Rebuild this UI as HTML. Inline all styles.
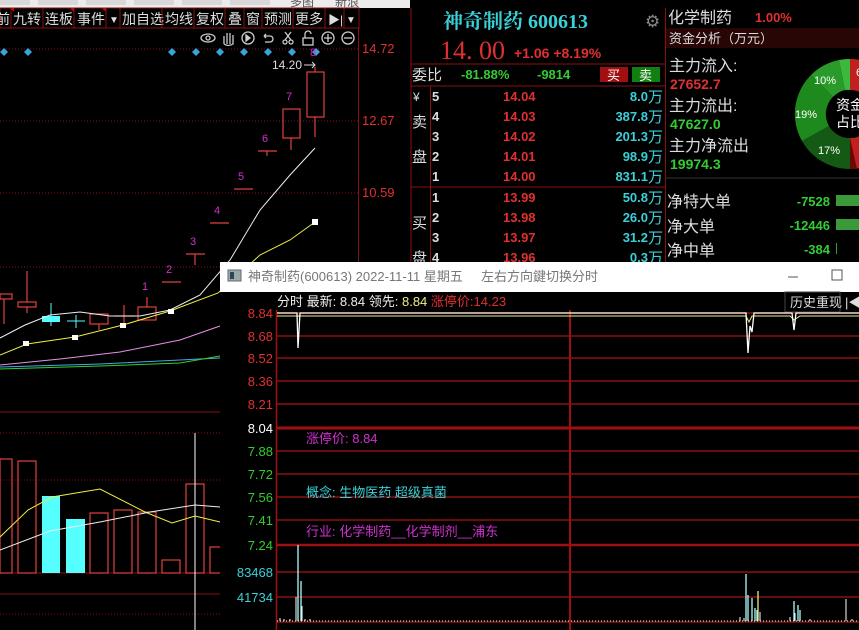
<!DOCTYPE html>
<html><head><meta charset="utf-8"><style>
html,body{margin:0;padding:0;background:#000;width:859px;height:630px;overflow:hidden}
svg{display:block}
text{font-family:"Liberation Sans","Noto Sans CJK SC",sans-serif}
.s{font-family:"Liberation Serif","Noto Serif CJK SC",serif}
</style></head><body>
<svg width="859" height="630" viewBox="0 0 859 630" xmlns="http://www.w3.org/2000/svg">
<rect width="859" height="630" fill="#000"/>
<rect x="0" y="0" width="410" height="8" fill="#ececec"/>
<rect x="0" y="0" width="30" height="5" fill="#d8d8d8"/><rect x="38" y="0" width="40" height="5" fill="#d8d8d8"/><rect x="86" y="0" width="40" height="5" fill="#d8d8d8"/><rect x="134" y="0" width="40" height="5" fill="#d8d8d8"/><rect x="182" y="0" width="40" height="5" fill="#d8d8d8"/><rect x="230" y="0" width="40" height="5" fill="#d8d8d8"/>
<text x="290" y="6" font-size="12" fill="#555">多图</text><text x="335" y="6" font-size="12" fill="#555">新浪</text>
<rect x="0" y="8" width="359" height="20" fill="#000" stroke="#8a1010" stroke-width="1"/>
<g font-size="14" fill="#ddd">
<text x="-4" y="24">前</text><text x="13" y="24">九转</text><text x="45" y="24">连板</text><text x="77" y="24">事件</text>
<text x="109" y="23" font-size="10">▼</text><text x="122" y="24">加自选</text><text x="165" y="24">均线</text><text x="196" y="24">复权</text>
<text x="228" y="24">叠</text><text x="246" y="24">窗</text><text x="264" y="24">预测</text><text x="295" y="24">更多</text>
<text x="328" y="24" font-size="12">▶|</text><text x="346" y="23" font-size="10">▼</text></g>
<g stroke="#8a1010"><line x1="11" y1="8" x2="11" y2="28"/><line x1="43" y1="8" x2="43" y2="28"/><line x1="74" y1="8" x2="74" y2="28"/><line x1="106" y1="8" x2="106" y2="28"/><line x1="120" y1="8" x2="120" y2="28"/><line x1="162" y1="8" x2="162" y2="28"/><line x1="194" y1="8" x2="194" y2="28"/><line x1="225" y1="8" x2="225" y2="28"/><line x1="244" y1="8" x2="244" y2="28"/><line x1="262" y1="8" x2="262" y2="28"/><line x1="293" y1="8" x2="293" y2="28"/><line x1="325" y1="8" x2="325" y2="28"/><line x1="344" y1="8" x2="344" y2="28"/></g>
<g fill="#d00"><path d="M10 8l4 0 0 4z"/><path d="M70 8l4 0 0 4z"/><path d="M102 8l4 0 0 4z"/></g>
<g stroke="#ccc" fill="none" stroke-width="1.3">
<ellipse cx="208" cy="38" rx="7" ry="4"/><circle cx="208" cy="38" r="2"/>
<path d="M224 44v-8M227 44v-11M230 44v-11M233 44v-9M224 44q4 3 9 0v-5"/>
<circle cx="248" cy="38" r="6"/><path d="M246 35l4 3-4 3z" fill="#ccc"/>
<path d="M264 36h6a3 3 0 010 6h-5M264 36l2-2M264 36l2 2"/>
<circle cx="285" cy="42" r="2"/><circle cx="291" cy="42" r="2"/><path d="M285 40l6-8M291 40l-6-8"/>
<rect x="303" y="38" width="10" height="7"/><path d="M305 38v-4a3 3 0 016 0"/>
<circle cx="328" cy="38" r="6"/><path d="M324 38h8M328 34v8"/>
<circle cx="348" cy="38" r="6"/><path d="M344 38h8"/></g>
<g stroke="#8a1010" stroke-dasharray="1 2"><line x1="0" y1="49" x2="358" y2="49"/><line x1="0" y1="121" x2="358" y2="121"/><line x1="0" y1="193" x2="358" y2="193"/><line x1="0" y1="267" x2="220" y2="267"/><line x1="0" y1="433" x2="220" y2="433"/><line x1="0" y1="480" x2="220" y2="480"/></g>
<g stroke="#8a1010"><line x1="0" y1="412" x2="220" y2="412"/><line x1="0" y1="573" x2="220" y2="573"/><line x1="0" y1="594" x2="220" y2="594"/><line x1="0" y1="614" x2="220" y2="614" stroke-dasharray="1 2"/></g>
<line x1="358.5" y1="28" x2="358.5" y2="262" stroke="#8a1010"/>
<g font-size="13" fill="#e03030"><text x="362" y="53">14.72</text><text x="362" y="125">12.67</text><text x="362" y="197">10.59</text></g>
<g fill="#3aa6d8"><path d="M4 48l4 4-4 4-4-4z"/><path d="M28 48l4 4-4 4-4-4z"/><path d="M172 48l4 4-4 4-4-4z"/><path d="M196 48l4 4-4 4-4-4z"/><path d="M220 48l4 4-4 4-4-4z"/><path d="M244 48l4 4-4 4-4-4z"/><path d="M268 48l4 4-4 4-4-4z"/><path d="M292 48l4 4-4 4-4-4z"/><path d="M316 48l4 4-4 4-4-4z"/></g>
<g stroke="#e04040" fill="none" stroke-width="1.2">
<rect x="0" y="294" width="12" height="5"/><line x1="4" y1="299" x2="4" y2="324"/>
<rect x="18" y="302" width="18" height="5"/><line x1="27" y1="271" x2="27" y2="302"/><line x1="27" y1="307" x2="27" y2="313"/>
<rect x="90" y="314" width="18" height="10"/><line x1="99" y1="324" x2="99" y2="330"/>
<line x1="115" y1="316" x2="135" y2="316"/><line x1="124" y1="305" x2="124" y2="325"/>
<rect x="138" y="307" width="18" height="13"/><line x1="147" y1="297" x2="147" y2="307"/>
<line x1="162" y1="282" x2="181" y2="282"/>
<line x1="186" y1="254" x2="205" y2="254"/><line x1="195" y1="254" x2="195" y2="265"/>
<line x1="210" y1="223" x2="229" y2="223"/>
<line x1="234" y1="189" x2="253" y2="189"/>
<line x1="258" y1="151" x2="277" y2="151"/><line x1="267" y1="151" x2="267" y2="156"/>
<rect x="283" y="109" width="17" height="29"/><line x1="291" y1="138" x2="291" y2="150"/>
<rect x="307" y="72" width="17" height="45"/><line x1="315" y1="67" x2="315" y2="72"/><line x1="315" y1="117" x2="315" y2="137"/></g>
<rect x="42" y="316" width="18" height="6" fill="#5ff"/><line x1="51" y1="303" x2="51" y2="326" stroke="#5ff"/>
<line x1="67" y1="321" x2="85" y2="321" stroke="#5ff"/><line x1="76" y1="315" x2="76" y2="328" stroke="#5ff"/>
<g font-size="11" fill="#d030d0"><text x="142" y="290">1</text><text x="166" y="273">2</text><text x="190" y="245">3</text><text x="214" y="214">4</text><text x="238" y="180">5</text><text x="262" y="142">6</text><text x="286" y="100">7</text><text x="310" y="56">8</text></g>
<text x="272" y="69" font-size="12" fill="#ddd">14.20</text><path d="M304 65h11M312 62l3 3-3 3" stroke="#ddd" fill="none"/>
<polyline points="0,338 25,325 50,315 80,312 110,316 140,316 170,310 200,295 230,260 260,210 290,175 315,148" fill="none" stroke="#eee"/>
<polyline points="0,355 27,344 75,337 123,325 170,311 218,293 260,255 290,240 315,222" fill="none" stroke="#ee4"/>
<polyline points="0,365 60,359 120,352 180,340 220,326" fill="none" stroke="#e890e8"/>
<polyline points="0,367 100,364 220,358" fill="none" stroke="#4ad"/>
<polyline points="0,369 100,366 180,363 220,356" fill="none" stroke="#3c3"/>
<g fill="#fff"><rect x="23" y="341" width="6" height="5"/><rect x="72" y="335" width="6" height="5"/><rect x="120" y="323" width="6" height="5"/><rect x="168" y="309" width="6" height="5"/><rect x="312" y="219" width="6" height="6"/></g>
<g stroke="#e04040" fill="none" stroke-width="1.2">
<rect x="0" y="459" width="12" height="114"/><rect x="18" y="461" width="18" height="112"/><rect x="90" y="513" width="18" height="60"/><rect x="114" y="510" width="18" height="63"/><rect x="138" y="512" width="18" height="61"/><rect x="162" y="560" width="18" height="13"/><rect x="186" y="484" width="18" height="89"/><rect x="210" y="547" width="12" height="26"/></g>
<rect x="42" y="496" width="18" height="77" fill="#5ff"/><rect x="66" y="519" width="19" height="54" fill="#5ff"/>
<line x1="195" y1="433" x2="195" y2="630" stroke="#fff"/>
<polyline points="0,537 28,510 52,497 100,489 145,512 172,523 195,516 220,522" fill="none" stroke="#ee4"/>
<polyline points="0,550 50,531 100,522 150,512 195,505 220,507" fill="none" stroke="#eee"/>
<line x1="411" y1="8" x2="411" y2="262" stroke="#8a1010"/>
<text x="443" y="28" class="s" font-size="20" font-weight="bold" fill="#3ad0d8">神奇制药 600613</text>
<text x="645" y="27" font-size="17" fill="#888">⚙</text>
<text x="440" y="59" class="s" font-size="26" fill="#e03030">14. 00</text>
<text x="514" y="58" font-size="14" font-weight="bold" fill="#e03030">+1.06  +8.19%</text>
<line x1="411" y1="64" x2="665" y2="64" stroke="#8a1010"/>
<text x="412" y="80" font-size="15" fill="#ddd">委比</text>
<text x="461" y="79" font-size="13" font-weight="bold" fill="#3c3">-81.88%</text><text x="537" y="79" font-size="13" font-weight="bold" fill="#3c3">-9814</text>
<rect x="600" y="67" width="28" height="15" fill="#a01010"/><text x="607" y="80" font-size="13" fill="#fff">买</text>
<rect x="632" y="67" width="28" height="15" fill="#108010"/><text x="639" y="80" font-size="13" fill="#fff">卖</text>
<line x1="411" y1="86" x2="665" y2="86" stroke="#8a1010"/>
<line x1="430.5" y1="86" x2="430.5" y2="262" stroke="#8a1010"/>
<line x1="411" y1="187" x2="665" y2="187" stroke="#8a1010"/>
<g font-size="15" fill="#ddd"><text x="413" y="101" font-size="12">¥</text><text x="412" y="127">卖</text><text x="412" y="162">盘</text><text x="412" y="228">买</text><text x="412" y="263">盘</text></g>
<g font-size="13" font-weight="bold">
<g fill="#ddd"><text x="432" y="101">5</text><text x="432" y="121">4</text><text x="432" y="141">3</text><text x="432" y="161">2</text><text x="432" y="181">1</text><text x="432" y="202">1</text><text x="432" y="222">2</text><text x="432" y="242">3</text><text x="432" y="262">4</text></g>
<g fill="#e03030"><text x="503" y="101">14.04</text><text x="503" y="121">14.03</text><text x="503" y="141">14.02</text><text x="503" y="161">14.01</text><text x="503" y="181">14.00</text><text x="503" y="202">13.99</text><text x="503" y="222">13.98</text><text x="503" y="242">13.97</text><text x="503" y="262">13.96</text></g>
<g fill="#3ad0d8" text-anchor="end"><text x="648" y="101">8.0</text><text x="648" y="121">387.8</text><text x="648" y="141">201.3</text><text x="648" y="161">98.9</text><text x="648" y="181">831.1</text><text x="648" y="202">50.8</text><text x="648" y="222">26.0</text><text x="648" y="242">31.2</text><text x="648" y="262">0.3</text></g></g>
<g font-size="15" fill="#3ad0d8"><text x="648" y="102">万</text><text x="648" y="122">万</text><text x="648" y="142">万</text><text x="648" y="162">万</text><text x="648" y="182">万</text><text x="648" y="203">万</text><text x="648" y="223">万</text><text x="648" y="243">万</text><text x="648" y="263">万</text></g>
<line x1="665.5" y1="8" x2="665.5" y2="262" stroke="#8a1010"/>
<text x="668" y="23" font-size="16" fill="#ddd">化学制药</text><text x="755" y="22" font-size="13" font-weight="bold" fill="#e03030">1.00%</text>
<rect x="666" y="28" width="193" height="20" fill="#280606"/>
<text x="669" y="43" font-size="13" fill="#ddd">资金分析（万元）</text>
<g font-size="16" fill="#ddd"><text x="669" y="71">主力流入:</text><text x="669" y="111">主力流出:</text><text x="669" y="151">主力净流出</text></g>
<g font-size="14" font-weight="bold"><text x="670" y="89" fill="#e03030">27652.7</text><text x="670" y="129" fill="#3c3">47627.0</text><text x="670" y="169" fill="#3c3">19974.3</text></g>
<line x1="666" y1="178" x2="859" y2="178" stroke="#333"/>
<g transform="translate(850,114)">
<path d="M0-55A55 55 0 0 1 0 55L0 24A24 24 0 0 0 0-24z" fill="#c02020"/>
<path d="M7 55A55 55 0 0 1 0 55L0 24z" fill="#6a0808"/>
<path d="M0 55A55 55 0 0 1-48 27L-21 12A24 24 0 0 0 0 24z" fill="#145a14"/>
<path d="M-48 27A55 55 0 0 1-39-39L-17-17A24 24 0 0 0-21 12z" fill="#1e8a1e"/>
<path d="M-39-39A55 55 0 0 1-11-54L-5-24A24 24 0 0 0-17-17z" fill="#2a9a2a"/>
<path d="M-11-54A55 55 0 0 1 0-55L0-24A24 24 0 0 0-5-24z" fill="#3cb83c"/>
<circle r="24" fill="#000"/>
<g font-size="11" fill="#fff"><text x="-36" y="-30">10%</text><text x="-55" y="4">19%</text><text x="-32" y="40">17%</text><text x="6" y="-38">6</text></g>
<text x="-14" y="-4" font-size="14" fill="#fff">资金</text><text x="-14" y="13" font-size="14" fill="#fff">占比</text></g>
<g font-size="16" fill="#ddd"><text x="667" y="207">净特大单</text><text x="667" y="232">净大单</text><text x="667" y="256">净中单</text></g>
<g font-size="13" font-weight="bold" fill="#3c3" text-anchor="end"><text x="830" y="206">-7528</text><text x="830" y="230">-12446</text><text x="830" y="254">-384</text></g>
<rect x="836" y="195" width="23" height="11" fill="#3a9a3a"/><rect x="836" y="219" width="23" height="11" fill="#3a9a3a"/><rect x="836" y="243" width="1" height="11" fill="#3a9a3a"/>
<rect x="220" y="262" width="639" height="368" fill="#000"/>
<rect x="220" y="262" width="639" height="30" fill="#fff"/>
<rect x="228" y="270" width="13" height="11" fill="#9aa" stroke="#667"/><rect x="230" y="272" width="4" height="7" fill="#345"/>
<text x="248" y="281" font-size="13" fill="#777">神奇制药(600613) 2022-11-11 星期五</text>
<text x="481" y="281" font-size="13" fill="#777">左右方向鍵切换分时</text>
<line x1="788" y1="277" x2="798" y2="277" stroke="#555"/>
<rect x="832" y="270" width="10" height="10" fill="none" stroke="#555"/>
<text x="277" y="306" font-size="13" fill="#eee">分时 最新: 8.84 <tspan>领先: </tspan><tspan fill="#ee8">8.84 </tspan><tspan fill="#e03030">涨停价:14.23</tspan></text>
<rect x="785" y="292" width="55" height="20" fill="#000" stroke="#444"/><text x="790" y="307" font-size="13" fill="#ddd">历史重现</text>
<text x="845" y="307" font-size="13" fill="#ddd">|◀</text>
<g stroke="#8a1010" stroke-width="1.5"><line x1="277" y1="313" x2="859" y2="313"/><line x1="277" y1="336" x2="859" y2="336"/><line x1="277" y1="358" x2="859" y2="358"/><line x1="277" y1="381" x2="859" y2="381"/><line x1="277" y1="404" x2="859" y2="404"/><line x1="277" y1="451" x2="859" y2="451"/><line x1="277" y1="474" x2="859" y2="474"/><line x1="277" y1="497" x2="859" y2="497"/><line x1="277" y1="520" x2="859" y2="520"/><line x1="277" y1="572" x2="859" y2="572"/><line x1="277" y1="597" x2="859" y2="597"/><line x1="277" y1="622" x2="859" y2="622"/></g>
<line x1="277" y1="428" x2="859" y2="428" stroke="#a01010" stroke-width="3"/><line x1="277" y1="545" x2="859" y2="545" stroke="#a01010" stroke-width="2.5"/>
<line x1="276.5" y1="310" x2="276.5" y2="630" stroke="#a01010" stroke-width="1.5"/><line x1="570" y1="310" x2="570" y2="630" stroke="#a01010" stroke-width="2"/>
<g font-size="13" text-anchor="end"><g fill="#e03030"><text x="273" y="318">8.84</text><text x="273" y="341">8.68</text><text x="273" y="363">8.52</text><text x="273" y="386">8.36</text><text x="273" y="409">8.21</text></g><text x="273" y="433" fill="#fff">8.04</text><g fill="#3c3"><text x="273" y="456">7.88</text><text x="273" y="479">7.72</text><text x="273" y="502">7.56</text><text x="273" y="525">7.41</text><text x="273" y="550">7.24</text></g><g fill="#3ad0d8"><text x="273" y="577">83468</text><text x="273" y="602">41734</text></g></g>
<polyline points="277,316 746,316 749,322 752,316 790,316 794,320 800,316 859,316" fill="none" stroke="#ee8"/>
<polyline points="277,313 297,313 298,348 300,313 746,313 748,353 750,326 752,332 754,313 792,313 794,330 796,313 859,313" fill="none" stroke="#fff" stroke-width="1.3"/>
<g font-size="13"><text x="306" y="443" fill="#d030d0">涨停价: 8.84</text><text x="306" y="497" fill="#3ad0d8">概念: 生物医药 超级真菌</text><text x="306" y="536" fill="#d030d0">行业: 化学制药__化学制剂__浦东</text></g>
<g stroke="#fff" stroke-width="1"><path d="M280 621v-3M284 621v-2M290 621v-2M296 621v-24M302 621v-15M305 621v-2M310 621v-2M740 621v-4M744 621v-3M760 621v-9M846 621v-22M852 621v-2M790 621v-4M795 621v-8M810 621v-2"/></g>
<path d="M298 621v-76M301 621v-40" stroke="#aff" stroke-width="1.3"/>
<path d="M746 621v-47M748 621v-26M752 621v-23M755 621v-13M757 621v-11M794 621v-20M798 621v-16M800 621v-11" stroke="#aff" stroke-width="1.3"/>
<path d="M758 621v-30" stroke="#ee8" stroke-width="1.3"/>
<line x1="277" y1="621" x2="859" y2="621" stroke="#fff" stroke-dasharray="1 2"/>
</svg>
</body></html>
